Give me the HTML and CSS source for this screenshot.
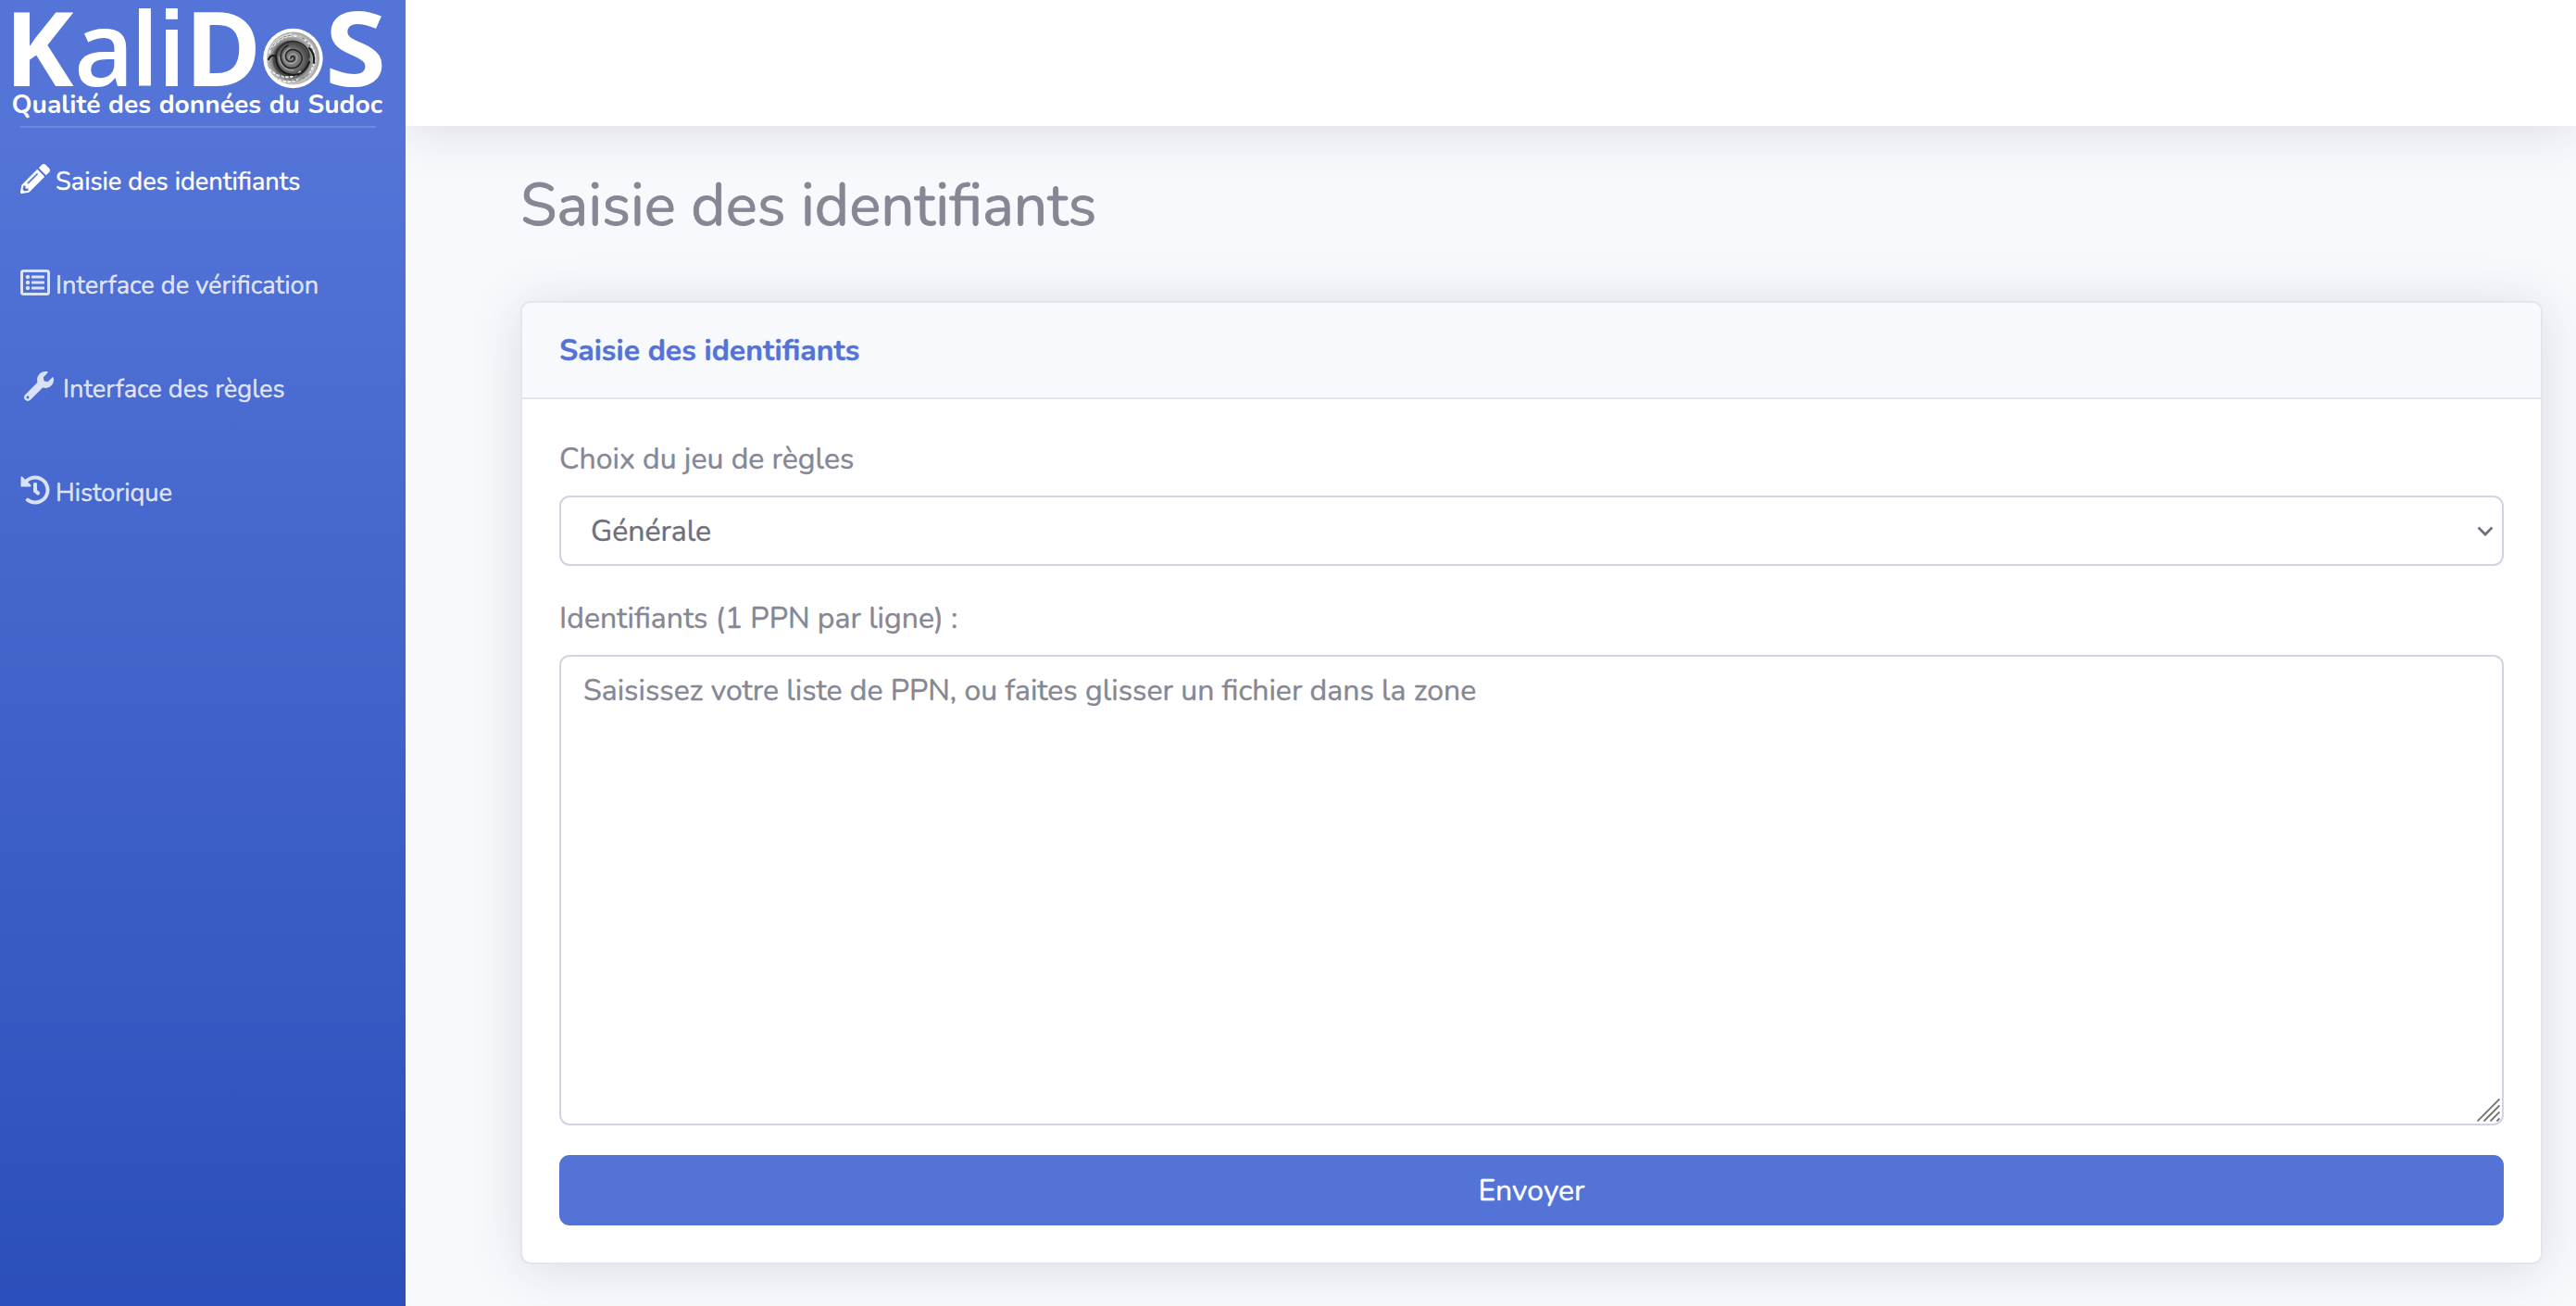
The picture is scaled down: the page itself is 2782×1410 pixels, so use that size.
FILE: index.html
```html
<!DOCTYPE html>
<html lang="fr">
<head>
<meta charset="utf-8">
<title>KaliDoS</title>
<link rel="stylesheet" href="styles.css">
</head>
<body>
<div class="wrapper">
  <nav class="sidebar">
    <a class="brand" aria-label="KaliDoS">
      <svg class="logo" width="438" height="136" viewBox="0 0 438 136">
        <defs>
          <radialGradient id="shell" cx="0.46" cy="0.52" r="0.58">
            <stop offset="0" stop-color="#8a8a8a"/>
            <stop offset="0.4" stop-color="#6a6a6a"/>
            <stop offset="0.56" stop-color="#444"/>
            <stop offset="0.64" stop-color="#8c8c8c"/>
            <stop offset="0.8" stop-color="#c4c4c4"/>
            <stop offset="1" stop-color="#808080"/>
          </radialGradient>
        </defs>
        <g class="logo-word">
          <text x="5" y="93">K</text>
          <text class="logo-thin" x="80" y="93">a</text>
          <text class="logo-stem" x="143.500" y="93" textLength="26" lengthAdjust="spacingAndGlyphs">l</text>
          <text class="logo-stem" x="172.500" y="93" textLength="26" lengthAdjust="spacingAndGlyphs">i</text>
          <text x="199.500" y="93">D</text>
          <text x="351" y="93" textLength="66" lengthAdjust="spacingAndGlyphs">S</text>
        </g>
        <circle cx="316.500" cy="63" r="32.200" fill="#fff"/>
        <circle cx="316.500" cy="63" r="28.500" fill="url(#shell)"/>
        <g fill="none" stroke-linecap="round">
          <path d="M291 57c4-12 14-19 25-20m-20 12c6-8 14-11 24-10m9 4c8 5 12 14 11 24m-4-18c5 9 5 20-1 29m-38 6c8 5 19 6 28 0m-34-9c9 9 24 12 34 2" stroke="#eee" stroke-width="2" stroke-dasharray="2 3"/>
          <path d="M293 53c4-9 12-14 22-15m12 3c7 5 11 12 12 20m-40 18c9 9 24 11 34 1" stroke="#666" stroke-width="1" stroke-dasharray="2 3"/>
          <path d="M298 60c2-11 12-17 22-15 9 2 14 9 14 17" stroke="#2b2b2b" stroke-width="1.500"/>
          <path d="M290 64c2-4 4-5 8-3 0 13 8 20 20 20 9-1 13-6 16-14M334 52c4 4 6 9 5 16" stroke="#1d1d1d" stroke-width="2.200"/>
          <path d="M314 63c0-3 4-3 4 0 0 4-7 5-9 0-2-6 4-11 10-9 7 2 9 10 5 15-4 6-14 6-18 0-5-7-3-16 5-20" stroke="#222" stroke-width="1.400"/>
          <path d="M312 63c0-6 8-7 9-1 0 7-9 9-13 4-3-5-1-12 5-14m-12 9c1 10 8 16 16 15" stroke="#b5b5b5" stroke-width="1"/>
        </g>
        <text class="logo-tagline" x="12.500" y="122" textLength="400.500" lengthAdjust="spacingAndGlyphs">Qualité des données du Sudoc</text>
      </svg>
    </a>
    <hr class="divider">
    <ul class="menu">
      <li class="item active"><svg class="icon" viewBox="0 0 512 512"><path d="M497.900 142.100l-46.100 46.100c-4.700 4.700-12.300 4.700-17 0l-111-111c-4.700-4.700-4.700-12.300 0-17l46.100-46.100c18.700-18.700 49.100-18.700 67.900 0l60.100 60.100c18.800 18.700 18.800 49.100 0 67.900zM284.200 99.800L21.600 362.400.4 483.900c-2.900 16.400 11.400 30.600 27.800 27.800l121.500-21.300 262.600-262.600c4.700-4.700 4.700-12.300 0-17l-111-111c-4.800-4.700-12.400-4.700-17.100 0zM124.100 339.900c-5.500-5.500-5.500-14.300 0-19.800l154-154c5.500-5.500 14.300-5.500 19.800 0s5.500 14.300 0 19.800l-154 154c-5.500 5.500-14.300 5.500-19.800 0zM88 424h48v36.300l-64.500 11.300-31.100-31.100L51.700 376H88v48z"/></svg><span>Saisie des identifiants</span></li>
      <li class="item"><svg class="icon" viewBox="0 0 512 512"><path d="M464 32H48C21.490 32 0 53.490 0 80v352c0 26.510 21.490 48 48 48h416c26.510 0 48-21.490 48-48V80c0-26.510-21.490-48-48-48zm-6 400H54a6 6 0 0 1-6-6V86a6 6 0 0 1 6-6h404a6 6 0 0 1 6 6v340a6 6 0 0 1-6 6zm-42-92v24c0 6.627-5.373 12-12 12H204c-6.627 0-12-5.373-12-12v-24c0-6.627 5.373-12 12-12h200c6.627 0 12 5.373 12 12zm0-96v24c0 6.627-5.373 12-12 12H204c-6.627 0-12-5.373-12-12v-24c0-6.627 5.373-12 12-12h200c6.627 0 12 5.373 12 12zm0-96v24c0 6.627-5.373 12-12 12H204c-6.627 0-12-5.373-12-12v-24c0-6.627 5.373-12 12-12h200c6.627 0 12 5.373 12 12zm-252 12c0 19.882-16.118 36-36 36s-36-16.118-36-36 16.118-36 36-36 36 16.118 36 36zm0 96c0 19.882-16.118 36-36 36s-36-16.118-36-36 16.118-36 36-36 36 16.118 36 36zm0 96c0 19.882-16.118 36-36 36s-36-16.118-36-36 16.118-36 36-36 36 16.118 36 36z"/></svg><span>Interface de vérification</span></li>
      <li class="item"><svg class="icon icon-fixed" viewBox="0 0 512 512"><path d="M507.730 109.100c-2.240-9.030-13.540-12.090-20.120-5.510l-74.360 74.360-67.880-11.310-11.310-67.880 74.360-74.360c6.620-6.620 3.430-17.900-5.660-20.160-47.380-11.740-99.550.91-136.580 37.930-39.640 39.640-50.550 97.100-34.050 147.200L18.740 402.760c-24.990 24.990-24.990 65.510 0 90.500 24.990 24.990 65.510 24.990 90.500 0l213.210-213.210c50.120 16.710 107.470 5.680 147.370-34.220 37.070-37.070 49.700-89.320 37.910-136.730zM64 472c-13.250 0-24-10.750-24-24 0-13.260 10.750-24 24-24s24 10.740 24 24c0 13.250-10.750 24-24 24z"/></svg><span>Interface des règles</span></li>
      <li class="item"><svg class="icon" viewBox="0 0 512 512"><path d="M504 255.531c.253 136.640-111.180 248.372-247.820 248.468-59.015.042-113.223-20.530-155.822-54.911-11.077-8.940-11.905-25.541-1.839-35.607l11.267-11.267c8.609-8.609 22.353-9.551 31.891-1.984C173.062 425.135 212.781 440 256 440c101.705 0 184-82.311 184-184 0-101.705-82.311-184-184-184-48.814 0-93.149 18.969-126.068 49.932l50.754 50.754c10.080 10.080 2.941 27.314-11.313 27.314H24c-8.837 0-16-7.163-16-16V38.627c0-14.254 17.234-21.393 27.314-11.314l49.372 49.372C129.209 34.136 189.552 8 256 8c136.810 0 247.747 110.780 248 247.531zm-180.912 78.784l9.823-12.630c8.138-10.463 6.253-25.542-4.210-33.679L288 256.349V152c0-13.255-10.745-24-24-24h-16c-13.255 0-24 10.745-24 24v135.651l65.409 50.874c10.463 8.137 25.541 6.253 33.679-4.210z"/></svg><span>Historique</span></li>
    </ul>
  </nav>
  <div class="content">
    <header class="topbar"></header>
    <main class="page">
      <h1 class="title">Saisie des identifiants</h1>
      <section class="card">
        <h6 class="card-header">Saisie des identifiants</h6>
        <form class="card-body">
          <label class="label" for="rules">Choix du jeu de règles</label>
          <div class="field">
            <select class="control select" id="rules"><option>Générale</option></select>
            <svg class="chevron" width="20" height="14" viewBox="0 0 20 14"><path d="M3.500 3.500l6.500 6.500 6.500-6.500" fill="none" stroke="#6d6f7d" stroke-width="2.700" stroke-linecap="square"/></svg>
          </div>
          <label class="label" for="ppn">Identifiants (1 PPN par ligne) :</label>
          <div class="field">
            <textarea class="control area" id="ppn" placeholder="Saisissez votre liste de PPN, ou faites glisser un fichier dans la zone"></textarea>
            <svg class="grip" width="25" height="25" viewBox="0 0 25 25"><path d="M.5 24.500l24-24M7.500 24.500l17-17M14.500 24.500l10-10M21.500 24.500l3-3" stroke="#747474" stroke-width="1.900"/></svg>
          </div>
          <button class="button" type="button">Envoyer</button>
        </form>
      </section>
    </main>
  </div>
</div>
</body>
</html>
```
FILE: styles.css
```css
* { box-sizing: border-box; }

body {
  margin: 0;
  font: 400 32px/1.5 Nunito, Lato, sans-serif;
  color: #868794;
  background: #f8f9fd;
  -webkit-text-stroke: .4px currentColor;
}

.wrapper {
  display: flex;
  height: 1410px;
  overflow: hidden;
}

.sidebar {
  position: relative;
  z-index: 1;
  flex: 0 0 438px;
  background: linear-gradient(180deg, #5474d8 10%, #2b4fba 100%);
}

.brand, .logo { display: block; }
.logo { -webkit-text-stroke: 0; }
.logo text { fill: #fff; }
.logo-word { font: 700 112px "Open Sans", sans-serif; }
.logo-thin { font-weight: 600; }
.logo-stem { font: 700 115px "Liberation Sans", Arial, sans-serif; }
.logo-tagline {
  font: 700 28.5px Nunito, sans-serif;
  word-spacing: 1px;
}

.divider {
  height: 2px;
  margin: 0 32px -1px 22px;
  border: 0;
  background: rgba(255, 255, 255, .15);
}

.menu {
  margin: 0;
  padding: 0;
  list-style: none;
}

.item {
  height: 112px;
  padding: 36px 0 0 22px;
  font-size: 27.2px;
  line-height: 48px;
  color: rgba(255, 255, 255, .8);
}

.item.active { color: #fff; }

.icon {
  width: 32px;
  height: 32px;
  margin-right: 6px;
  vertical-align: -4px;
  fill: currentColor;
}

.icon-fixed { margin: 0 10px 0 4px; }

.content { flex: 1; }

.topbar {
  height: 136px;
  background: #fff;
  box-shadow: 0 4.8px 56px rgba(58, 59, 69, .15);
}

.page { padding: 47.5px 36px 0 124px; }

.title {
  margin: 0 0 64.7px;
  font-size: 64px;
  font-weight: 400;
  line-height: 1.2;
  -webkit-text-stroke-width: .8px;
}

.card {
  height: 1040px;
  border: 2px solid #e3e5ef;
  border-radius: 11.2px;
  background: #fff;
  box-shadow: 0 4.8px 56px rgba(58, 59, 69, .15);
}

.card-header {
  height: 104px;
  margin: 0;
  padding: 33px 40px 31px;
  border-bottom: 2px solid #e3e5ef;
  border-radius: 9px 9px 0 0;
  font-size: 32px;
  font-weight: 700;
  line-height: 1.2;
  color: #5373d7;
  background: #f8f9fd;
}

.card-body { padding: 41px 40px 39px; }

.label {
  display: block;
  margin-bottom: 15px;
}

.field {
  position: relative;
  margin-bottom: 33px;
}

.field:last-of-type { margin-bottom: 32px; }

.control {
  display: block;
  width: 100%;
  border: 2px solid #d1d3e2;
  border-radius: 11.2px;
  font: inherit;
  color: #6d6f7d;
  background: #fff;
  -webkit-text-stroke: inherit;
}

.select {
  height: 76px;
  padding: 13px 32px 11px;
  appearance: none;
}

.chevron {
  position: absolute;
  top: 32px;
  right: 10px;
}

.area {
  height: 508px;
  padding: 13px 24px 11px;
  resize: none;
}

.area::placeholder {
  color: #868794;
  -webkit-text-stroke: .4px #868794;
}

.grip {
  position: absolute;
  right: 4px;
  bottom: 4px;
}

.button {
  display: block;
  width: 100%;
  height: 76px;
  padding: 13px 24px 11px;
  border: 2px solid #5373d7;
  border-radius: 11.2px;
  font: inherit;
  color: #fff;
  background: #5373d7;
  -webkit-text-stroke: .4px #fff;
}
```
